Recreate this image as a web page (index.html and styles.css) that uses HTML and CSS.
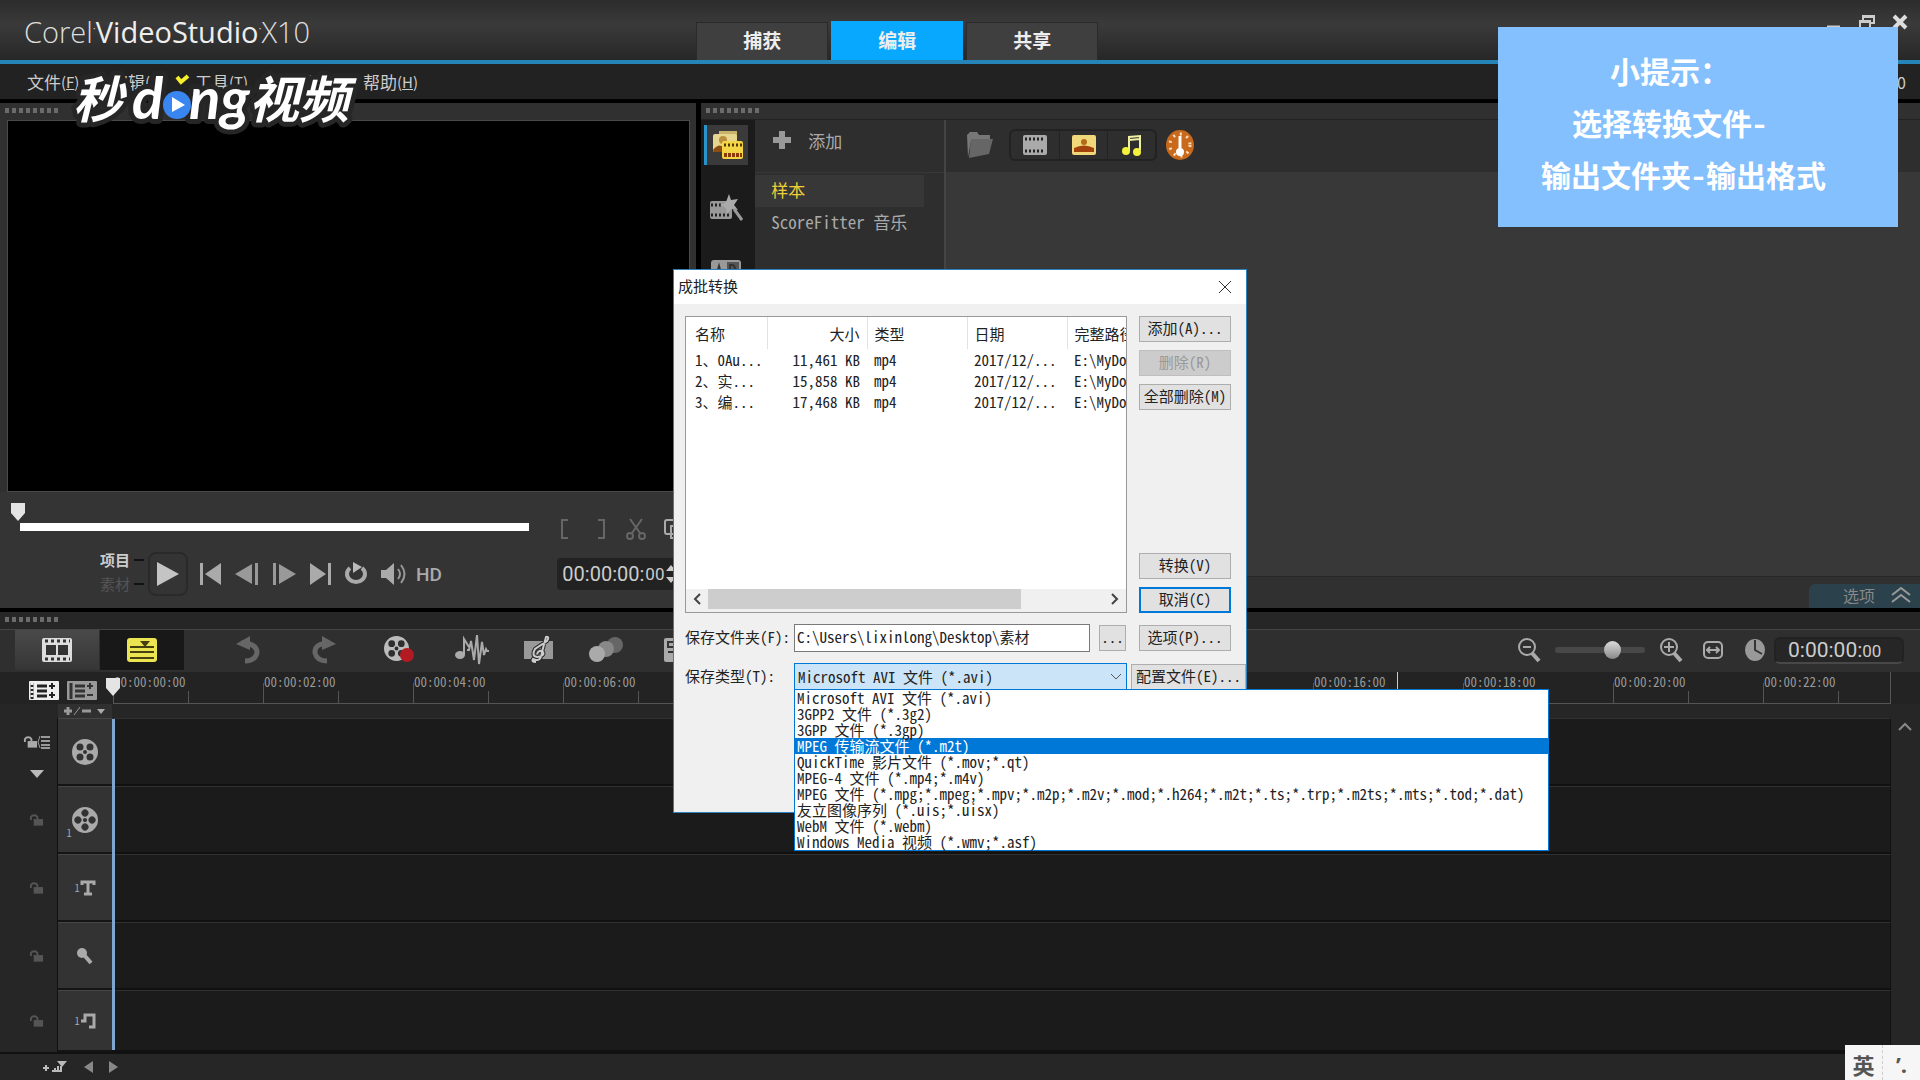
FILE: index.html
```
<!DOCTYPE html>
<html lang="zh-CN">
<head>
    <meta charset="utf-8">
    <title>Corel VideoStudio X10</title>
    <link rel="stylesheet" href="styles.css">
</head>
<body>
<!-- shared icons -->
<svg class="defs" width="0" height="0">
    <symbol id="lock" viewBox="0 0 16 16">
        <path d="M2 8V5a4 4 0 0 1 7 0v2" fill="none" stroke="currentColor" stroke-width="2"/>
        <rect x="5" y="7" width="10" height="7" fill="currentColor"/>
    </symbol>
    <symbol id="reel" viewBox="0 0 26 26">
        <path fill-rule="evenodd" fill="currentColor" d="M13 0a13 13 0 1 0 0 26a13 13 0 1 0 0-26zM8 4.500a3.500 3.500 0 1 1 0 7a3.500 3.500 0 1 1 0-7zM18 4.500a3.500 3.500 0 1 1 0 7a3.500 3.500 0 1 1 0-7zM8 14.500a3.500 3.500 0 1 1 0 7a3.500 3.500 0 1 1 0-7zM18 14.500a3.500 3.500 0 1 1 0 7a3.500 3.500 0 1 1 0-7zM13 11a2 2 0 1 1 0 4a2 2 0 1 1 0-4z"/>
    </symbol>
    <symbol id="grip" viewBox="0 0 60 6">
        <path d="M3 0v5M10 0v5M17 0v5M24 0v5M31 0v5M38 0v5M45 0v5M52 0v5" stroke="#6b6b6b" stroke-width="4"/>
    </symbol>
    <symbol id="film" viewBox="0 0 24 20">
        <rect width="24" height="20" rx="2" fill="currentColor"/>
        <path d="M2 4h20M2 16h20" stroke="#222" stroke-width="3" stroke-dasharray="2 2"/>
    </symbol>
    <symbol id="marker" viewBox="0 0 16 18">
        <path d="M1 0h14v10l-7 8l-7-8z" fill="#e4e4e4"/>
    </symbol>
</svg>

<header class="titlebar">
    <h1 class="logo">Corel<sup>•</sup><b>VideoStudio</b><sup>•</sup>X10</h1>
    <nav class="tabs">
        <button class="tab">捕获</button>
        <button class="tab active">编辑</button>
        <button class="tab">共享</button>
    </nav>
    <div class="window-buttons">
        <button aria-label="最小化"><svg width="16" height="16"><path d="M1 13h13" stroke="#ccc" stroke-width="3"/></svg></button>
        <button aria-label="还原"><svg width="18" height="16"><path d="M5 6V2h11v7h-3M2 15V7h10v8M2 8h10M5 3h11" fill="none" stroke="#ccc" stroke-width="2"/></svg></button>
        <button aria-label="关闭"><svg width="16" height="16"><path d="M2 2l12 12M14 2L2 14" stroke="#ddd" stroke-width="4"/></svg></button>
    </div>
</header>

<nav class="menubar">
    <button>文件<small>(<u>F</u>)</small></button>
    <button>编辑<small>(<u>E</u>)</small></button>
    <button>工具<small>(<u>T</u>)</small></button>
    <button>设置<small>(<u>S</u>)</small></button>
    <button>帮助<small>(<u>H</u>)</small></button>
    <span class="project-info">0</span>
</nav>

<main class="workspace">
    <section class="player">
        <svg class="grip" width="60" height="6"><use href="#grip"/></svg>
        <div class="screen"></div>
        <div class="scrub">
            <div class="track-bar"><svg class="thumb" width="16" height="18"><use href="#marker"/></svg></div>
            <div class="trim">
                <svg width="50" height="22" fill="none" stroke="#666" stroke-width="2"><path d="M9 2H3v18h6M39 2h6v18h-6"/></svg>
                <svg width="22" height="22" fill="none" stroke="#666" stroke-width="2"><path d="M5 1l10 14M17 1L7 15"/><circle cx="5" cy="18" r="3"/><circle cx="17" cy="18" r="3"/></svg>
                <svg width="22" height="22" fill="none" stroke="#aaa" stroke-width="2"><rect x="2" y="2" width="14" height="14" rx="2"/><rect x="8" y="8" width="12" height="12"/></svg>
            </div>
        </div>
        <div class="controls">
            <div class="mode"><span class="on">项目</span><span>素材</span></div>
            <button class="play" aria-label="播放"><svg width="24" height="26"><path d="M1 1l22 12L1 25z" fill="#c4c4c4"/></svg></button>
            <button aria-label="起始"><svg width="22" height="22"><path d="M0 0h3v22H0zM21 0v22L5 11z" fill="#aaa"/></svg></button>
            <button aria-label="上一帧"><svg width="26" height="22"><path d="M18 1v20L1 11zM21 0h3v22h-3z" fill="#999"/></svg></button>
            <button aria-label="下一帧"><svg width="26" height="22"><path d="M7 1v20l17-10zM1 0h3v22H1z" fill="#999"/></svg></button>
            <button aria-label="结束"><svg width="22" height="22"><path d="M18 0h3v22h-3zM0 0v22l16-11z" fill="#aaa"/></svg></button>
            <button aria-label="重复"><svg width="24" height="24"><path d="M6 6a9 8 0 1 0 12 0" fill="none" stroke="#aaa" stroke-width="4"/><path d="M9 0l9 5l-9 6z" fill="#bbb"/></svg></button>
            <button aria-label="音量"><svg width="28" height="24"><path d="M1 8h5l8-7v22l-8-7H1z" fill="#aaa"/><path d="M18 7q4 5 0 10M21 3q7 9 0 18" fill="none" stroke="#999" stroke-width="2"/></svg></button>
            <button class="hd">HD</button>
            <div class="timecode">00:00:00:<small>00</small><svg width="12" height="20"><path d="M1 7l5-6l5 6zM1 13l5 6l5-6z" fill="#ccc"/></svg></div>
        </div>
    </section>

    <section class="library">
        <svg class="grip" width="60" height="6"><use href="#grip"/></svg>
        <div class="library-body">
            <div class="rail">
                <button class="active" aria-label="媒体">
                    <svg width="32" height="30"><path d="M7 1h18v6H7z" fill="#c9b36a"/><rect x="1" y="4" width="24" height="18" rx="2" fill="#e6d68e"/><circle cx="11" cy="10" r="4" fill="#b98e3c"/><path d="M1 20q6-8 12-2v4H2z" fill="#8d4c12"/><rect x="10" y="11" width="21" height="18" rx="2" fill="#f4d545"/><path d="M12 15h18" stroke="#4d3708" stroke-width="3" stroke-dasharray="2 2"/><path d="M12 25h18" stroke="#8d3c08" stroke-width="4" stroke-dasharray="3 1"/></svg>
                </button>
                <button aria-label="即时项目">
                    <svg width="34" height="28"><rect x="1" y="7" width="22" height="18" rx="2" fill="#999"/><path d="M2 11h20M2 21h20" stroke="#222" stroke-width="3" stroke-dasharray="2 2"/><path d="M20 0l2 6l7-1l-4 6l4 5l-7-1l-4 5l-1-6l-6-3l6-3z" fill="#aaa"/><path d="M25 15l8 11" stroke="#999" stroke-width="3"/></svg>
                </button>
                <button aria-label="转场">
                    <svg width="30" height="22"><rect x="0" y="0" width="30" height="22" rx="3" fill="#999"/><path d="M16 2h12v18H16z" fill="#555"/><path d="M5 17l3-11l3 11M19 17V5h3q4 3 0 6h-3" fill="none" stroke="#333" stroke-width="2"/></svg>
                </button>
            </div>
            <div class="folders">
                <button class="add"><svg width="18" height="20"><path d="M9 1v18M0 10h18" stroke="#999" stroke-width="6"/></svg>添加</button>
                <ul>
                    <li class="selected">样本</li>
                    <li>ScoreFitter 音乐</li>
                </ul>
            </div>
            <div class="media">
                <div class="media-toolbar">
                    <button aria-label="导入"><svg width="28" height="26"><path d="M1 3l3-3h7l2 3h11v6H5L2 25z" fill="#777"/><path d="M5 7h22l-4 15L3 26z" fill="#666"/></svg></button>
                    <div class="filters">
                        <button class="grey" aria-label="视频"><svg width="24" height="20"><use href="#film"/></svg></button>
                        <button aria-label="照片"><svg width="24" height="20"><rect width="24" height="20" rx="2" fill="#efd77a"/><circle cx="12" cy="7" r="3" fill="#b06a18"/><path d="M2 17v-4q10-5 20 0v4z" fill="#a2420c"/></svg></button>
                        <button aria-label="音频"><svg width="22" height="22"><path d="M8 17V3l11-1v14M8 6l11-1" fill="none" stroke="#f1f0a0" stroke-width="2"/><circle cx="5" cy="17" r="4" fill="#f4f23c"/><circle cx="16" cy="18" r="4" fill="#f4f23c"/></svg></button>
                    </div>
                    <button aria-label="仪表"><svg width="28" height="30"><ellipse cx="14" cy="15" rx="14" ry="15" fill="#c8691c"/><ellipse cx="14" cy="15" rx="10" ry="11" fill="none" stroke="#f6dcc0" stroke-width="3" stroke-dasharray="2 5"/><path d="M14 6v12" stroke="#fff" stroke-width="3"/><circle cx="14" cy="22" r="4" fill="#fff"/></svg></button>
                </div>
                <div class="media-grid"></div>
                <div class="media-footer">
                    <button class="options">选项<svg width="20" height="16" fill="none" stroke="#999" stroke-width="2"><path d="M1 8l9-7l9 7M1 15l9-7l9 7"/></svg></button>
                </div>
            </div>
        </div>
    </section>
</main>

<section class="timeline">
    <svg class="grip" width="60" height="6"><use href="#grip"/></svg>
    <div class="timeline-toolbar">
        <button class="view" aria-label="故事板视图"><svg width="30" height="24"><rect width="30" height="24" rx="2" fill="#ddd"/><path d="M3 3h25M3 21h25" stroke="#333" stroke-width="3" stroke-dasharray="3 3"/><path d="M4 7h10v10H4zM16 7h10v10H16z" fill="#333"/></svg></button>
        <button class="view active" aria-label="时间轴视图"><svg width="30" height="24"><rect width="30" height="24" rx="3" fill="#ece552"/><path d="M3 9h24M3 14h24M3 20h24" stroke="#444010" stroke-width="2"/><path d="M13 3h10l-5 6z" fill="#444010"/></svg></button>
        <div class="tools">
            <button class="wide" aria-label="撤销"><svg width="24" height="28"><path d="M5 7q16 0 16 10q-2 8-12 8" fill="none" stroke="#666" stroke-width="5"/><path d="M0 8l14-8v14z" fill="#666"/></svg></button>
            <button class="wide" aria-label="重做"><svg width="24" height="28"><path d="M18 7q-16 0-15 10q2 8 12 8" fill="none" stroke="#666" stroke-width="5"/><path d="M24 8L10 0v14z" fill="#666"/></svg></button>
            <button class="wide" aria-label="录制"><svg width="32" height="28"><svg x="0" y="0" width="25" height="25" color="#bbb"><use href="#reel"/></svg><circle cx="23" cy="19" r="7" fill="#b31b22"/></svg></button>
            <button aria-label="混音器"><svg width="34" height="30"><ellipse cx="5" cy="20" rx="5" ry="4" fill="#aaa"/><path d="M9 20V4l5 8M12 15h2l2-9l3 19l3-25l2 29l3-22l2 13l2-6l1 2h3" fill="none" stroke="#aaa" stroke-width="2"/></svg></button>
            <button aria-label="自动音乐"><svg width="32" height="30"><rect x="1" y="6" width="29" height="18" fill="#999"/><path d="M13 27q-5 0-3-3q8 4 9-7l4-15q4-1 1 4L12 14q-4 7 2 8q8-1 6-5q-4-3-6 2" fill="none" stroke="#2b2b2b" stroke-width="4"/><path d="M13 27q-5 0-3-3q8 4 9-7l4-15q4-1 1 4L12 14q-4 7 2 8q8-1 6-5q-4-3-6 2" fill="none" stroke="#ccc" stroke-width="2"/></svg></button>
            <button aria-label="追踪运动"><svg width="34" height="26"><circle cx="26" cy="8" r="8" fill="#666"/><circle cx="17" cy="12" r="8" fill="#888"/><circle cx="8" cy="17" r="8" fill="#aaa"/></svg></button>
            <button aria-label="字幕编辑器"><svg width="18" height="24"><rect width="18" height="24" rx="2" fill="#aaa"/><path d="M4 4h10v5H4zM4 14h10" stroke="#333" stroke-width="2" fill="none"/></svg></button>
        </div>
        <div class="zoom">
            <button aria-label="缩小"><svg width="24" height="26" fill="none" stroke="#aaa"><circle cx="10" cy="10" r="8" stroke-width="2"/><path d="M6 10h8" stroke-width="2"/><path d="M15 16l7 8" stroke-width="4"/></svg></button>
            <input type="range" min="0" max="100" value="67" aria-label="缩放">
            <button aria-label="放大"><svg width="24" height="26" fill="none" stroke="#aaa"><circle cx="10" cy="10" r="8" stroke-width="2"/><path d="M5 10h10M10 5v10" stroke-width="2"/><path d="M15 16l7 8" stroke-width="4"/></svg></button>
            <button aria-label="适合窗口"><svg width="20" height="18" fill="none" stroke="#aaa" stroke-width="2"><rect x="1" y="1" width="18" height="16" rx="4"/><path d="M4 9h12M7 6L4 9l3 3M13 6l3 3l-3 3"/></svg></button>
            <button aria-label="项目区间"><svg width="20" height="22"><ellipse cx="10" cy="11" rx="10" ry="11" fill="#999"/><path d="M10 1v10l7 4" fill="none" stroke="#333" stroke-width="2"/></svg></button>
            <div class="duration">0:00:00:<small>00</small></div>
        </div>
    </div>
    <div class="ruler-row">
        <div class="corner">
            <svg width="30" height="20"><rect width="30" height="19" rx="1" fill="#eee"/><path d="M8 5h10M8 10h10M8 15h10M3 2v16" stroke="#222" stroke-width="3"/><path d="M3 2v16" stroke="#eee" stroke-width="3" stroke-dasharray="2 2"/><path d="M23 2v6M20 5h6M23 11v6M20 14h6" stroke="#222" stroke-width="2"/></svg>
            <svg width="30" height="20"><rect width="30" height="19" rx="1" fill="#999"/><path d="M8 5h10M8 10h10M8 15h10M4 2v16" stroke="#333" stroke-width="3"/><path d="M23 2v6M20 5h6M20 14h6" stroke="#333" stroke-width="2"/></svg>
        </div>
        <div class="ruler">
            <span>00:00:00:00</span><span>00:00:02:00</span><span>00:00:04:00</span><span>00:00:06:00</span>
            <span>00:00:08:00</span><span>00:00:10:00</span><span>00:00:12:00</span><span>00:00:14:00</span>
            <span>00:00:16:00</span><span>00:00:18:00</span><span>00:00:20:00</span><span>00:00:22:00</span>
            <i class="hover-mark"></i>
        </div>
        <svg class="playhead" width="16" height="18"><use href="#marker"/></svg>
    </div>
    <div class="tracks">
        <button class="track-menu" aria-label="添加/删除轨道"><svg width="44" height="10"><path d="M1 5h8M5 1v8M19 5h9" stroke="#999" stroke-width="3"/><path d="M11 9l6-8" stroke="#999" stroke-width="1"/><path d="M34 3h8l-4 5z" fill="#aaa"/></svg></button>
        <div class="track">
            <div class="track-lock first"><svg width="28" height="16"><svg width="15" height="16" color="#aaa"><use href="#lock"/></svg><path d="M18 3h9M18 7h9M18 11h9M18 14h9" stroke="#999" stroke-width="2"/><path d="M17 2l-2 6l2 6" stroke="#999" fill="none"/></svg><svg width="14" height="8"><path d="M0 0h14L7 8z" fill="#bbb"/></svg></div>
            <div class="track-head"><svg width="26" height="26"><use href="#reel"/></svg></div>
            <div class="lane"></div>
        </div>
        <div class="track">
            <div class="track-lock"><svg width="15" height="16"><use href="#lock"/></svg></div>
            <div class="track-head reel-head"><sub>1</sub><svg width="26" height="26"><g transform="rotate(45 13 13)"><use href="#reel" width="26" height="26"/></g></svg></div>
            <div class="lane"></div>
        </div>
        <div class="track">
            <div class="track-lock"><svg width="15" height="16"><use href="#lock"/></svg></div>
            <div class="track-head"><sub>1</sub><svg width="16" height="16"><path d="M2 5V2h12v3M8 2v12M4 14h8" fill="none" stroke="currentColor" stroke-width="3"/></svg></div>
            <div class="lane"></div>
        </div>
        <div class="track">
            <div class="track-lock"><svg width="15" height="16"><use href="#lock"/></svg></div>
            <div class="track-head"><svg width="16" height="18"><circle cx="5" cy="6" r="5" fill="currentColor"/><path d="M8 9l6 7" stroke="currentColor" stroke-width="4"/></svg></div>
            <div class="lane"></div>
        </div>
        <div class="track last">
            <div class="track-lock"><svg width="15" height="16"><use href="#lock"/></svg></div>
            <div class="track-head"><sub>1</sub><svg width="16" height="18"><path d="M1 9h4V3h9v12h-5" fill="none" stroke="currentColor" stroke-width="3"/></svg></div>
            <div class="lane"></div>
        </div>
        <i class="playline"></i>
        <svg class="scroll-up" width="14" height="9"><path d="M1 8l6-6l6 6" fill="none" stroke="#888" stroke-width="2"/></svg>
    </div>
    <div class="timeline-footer">
        <button aria-label="轨道高度"><svg width="26" height="12"><path d="M1 7h6M4 4v6M10 10h3M13 7v3M16 5v5M19 5v5M10 10h10" stroke="#bbb" stroke-width="2"/><path d="M15 0h10l-5 6z" fill="#bbb"/></svg></button>
        <button aria-label="向左"><svg width="9" height="12"><path d="M9 0v12L0 6z" fill="#888"/></svg></button>
        <button aria-label="向右"><svg width="9" height="12"><path d="M0 0v12l9-6z" fill="#888"/></svg></button>
    </div>
</section>

<!-- batch convert dialog -->
<div class="dialog" role="dialog" aria-labelledby="dialogTitle">
    <div class="dialog-title">
        <span id="dialogTitle">成批转换</span>
        <button aria-label="关闭"><svg width="14" height="14"><path d="M1 1l12 12M13 1L1 13" stroke="#333" stroke-width="1"/></svg></button>
    </div>
    <div class="dialog-body">
        <div class="file-list">
            <table>
                <thead>
                    <tr><th class="name">名称</th><th class="num">大小</th><th>类型</th><th>日期</th><th>完整路径</th></tr>
                </thead>
                <tbody>
                    <tr><td class="name">1、0Au...</td><td class="num">11,461 KB</td><td>mp4</td><td>2017/12/...</td><td>E:\MyDoc</td></tr>
                    <tr><td class="name">2、实...</td><td class="num">15,858 KB</td><td>mp4</td><td>2017/12/...</td><td>E:\MyDoc</td></tr>
                    <tr><td class="name">3、编...</td><td class="num">17,468 KB</td><td>mp4</td><td>2017/12/...</td><td>E:\MyDoc</td></tr>
                </tbody>
            </table>
            <div class="hscroll">
                <svg width="22" height="20"><path d="M14 5l-5 5l5 5" fill="none" stroke="#444" stroke-width="2"/></svg>
                <div class="hscroll-track"><div class="hscroll-thumb"></div></div>
                <svg width="22" height="20"><path d="M8 5l5 5l-5 5" fill="none" stroke="#444" stroke-width="2"/></svg>
            </div>
        </div>
        <div class="dialog-buttons">
            <button class="btn">添加(A)...</button>
            <button class="btn" disabled>删除(R)</button>
            <button class="btn">全部删除(M)</button>
            <button class="btn push">转换(V)</button>
            <button class="btn default">取消(C)</button>
        </div>
    </div>
    <div class="form-row">
        <label for="folder">保存文件夹(F):</label>
        <input type="text" id="folder" value="C:\Users\lixinlong\Desktop\素材">
        <button class="btn browse">...</button>
        <button class="btn">选项(P)...</button>
    </div>
    <div class="form-row type-row">
        <label for="type">保存类型(T):</label>
        <div class="combo">
            <select id="type"><option>Microsoft AVI 文件 (*.avi)</option></select>
            <svg class="arrow" width="12" height="8"><path d="M1 1l5 5l5-5" fill="none" stroke="#555"/></svg>
            <ul class="dropdown" role="listbox">
                <li role="option">Microsoft AVI 文件 (*.avi)</li>
                <li role="option">3GPP2 文件 (*.3g2)</li>
                <li role="option">3GPP 文件 (*.3gp)</li>
                <li role="option" class="selected" aria-selected="true">MPEG 传输流文件 (*.m2t)</li>
                <li role="option">QuickTime 影片文件 (*.mov;*.qt)</li>
                <li role="option">MPEG-4 文件 (*.mp4;*.m4v)</li>
                <li role="option">MPEG 文件 (*.mpg;*.mpeg;*.mpv;*.m2p;*.m2v;*.mod;*.h264;*.m2t;*.ts;*.trp;*.m2ts;*.mts;*.tod;*.dat)</li>
                <li role="option">友立图像序列 (*.uis;*.uisx)</li>
                <li role="option">WebM 文件 (*.webm)</li>
                <li role="option">Windows Media 视频 (*.wmv;*.asf)</li>
            </ul>
        </div>
        <button class="btn profile">配置文件(E)...</button>
    </div>
</div>

<svg class="cursor" width="14" height="22"><path d="M1 1v17l4-4l3 7l3-1l-3-7h5z" fill="#fff" stroke="#222"/></svg>

<svg class="watermark" width="300" height="80" role="img" aria-label="秒dong视频">
    <g class="mark-text">
        <text x="8" y="56" class="cjk">秒</text>
        <text x="184" y="56" class="cjk">视频</text>
        <text x="67" y="57">d</text>
        <text x="124" y="57">ng</text>
    </g>
    <circle cx="112" cy="43" r="14" fill="#3a86f0"/>
    <path d="M107 35v15l13-7z" fill="#fff"/>
    <path d="M112 15l4 5l7-6" fill="none" stroke="#f7ee2c" stroke-width="4"/>
</svg>

<aside class="tip">
    <p class="heading">小提示：</p>
    <p class="step">选择转换文件-</p>
    <p class="detail">输出文件夹-输出格式</p>
</aside>

<div class="ime"><span>英</span><span class="punct">’.</span></div>
</body>
</html>
```
FILE: styles.css
```
* {
    box-sizing: border-box;
}
body {
    margin: 0;
    height: 100vh;
    display: flex;
    flex-direction: column;
    overflow: hidden;
    background-color: #000;
    color: #aaa;
    font-family: "Noto Sans CJK SC", sans-serif;
    font-size: 16px;
}
button {
    border: 0;
    padding: 0;
    background: none;
    color: inherit;
    font: inherit;
    display: flex;
    align-items: center;
    justify-content: center;
}
ul {
    list-style: none;
    margin: 0;
    padding: 0;
}
svg {
    flex: none;
    display: block;
}
.defs {
    position: absolute;
}
.grip {
    margin: 5px 4px 6px;
}

/* title bar */
.titlebar {
    height: 64px;
    display: grid;
    grid-template-columns: 36% 1fr;
    border-bottom: 4px solid #2585b8;
    background: linear-gradient(#2c2c2c, #3a3a3a 40%, #272727);
    position: relative;
}
.logo {
    margin: 0 0 0 24px;
    align-self: center;
    color: #ddd;
    font-family: "Open Sans", sans-serif;
    font-size: 29px;
    font-weight: 300;
    line-height: 40px;
    padding-top: 4px;
    white-space: nowrap;
}
.logo b {
    font-weight: 400;
    color: #eee;
}
.logo sup {
    font-size: 8px;
    vertical-align: 12px;
    line-height: 0;
}
.tabs {
    display: flex;
    align-items: flex-end;
    gap: 3px;
    padding-left: 5px;
}
.tab {
    width: 132px;
    height: 38px;
    padding-bottom: 3px;
    background-color: #3f3f3f;
    border: 1px solid #2a2a2a;
    border-bottom: 0;
    color: #eee;
    font-size: 19px;
    font-weight: 700;
    line-height: 32px;
}
.tab.active {
    background-color: #08a8ff;
    border-color: #08a8ff;
    height: 39px;
}
.window-buttons {
    position: absolute;
    top: 14px;
    right: 12px;
    display: flex;
    gap: 16px;
}

/* menu bar */
.menubar {
    height: 35px;
    padding: 0 14px 0 27px;
    display: flex;
    align-items: center;
    background-color: #222;
    color: #ccc;
}
.menubar button {
    width: 84px;
    justify-content: flex-start;
    font-size: 17px;
}
.menubar small {
    font-size: 15px;
}
.project-info {
    margin-left: auto;
}

/* player */
.workspace {
    flex: 1;
    min-height: 0;
    margin: 4px 0;
    display: grid;
    grid-template-columns: 4fr 7fr;
    gap: 5px;
}
.player, .library {
    min-width: 0;
    display: flex;
    flex-direction: column;
    background-color: #303030;
}
.screen {
    flex: 1;
    margin: 0 6px 0 7px;
    background-color: #000;
    border: 1px solid #4a4a4a;
}
.scrub {
    height: 56px;
    padding: 0 10px 0 20px;
    display: flex;
    align-items: center;
    background-color: #343434;
}
.track-bar {
    width: 509px;
    height: 8px;
    margin-top: 14px;
    background-color: #fff;
    position: relative;
}
.thumb {
    position: absolute;
    left: -10px;
    top: -20px;
}
.trim {
    display: flex;
    gap: 16px;
    margin: 18px 0 0 30px;
}
.controls {
    height: 60px;
    padding: 0 0 8px 100px;
    display: flex;
    align-items: center;
    gap: 12px;
    background-color: #343434;
}
.mode {
    display: flex;
    flex-direction: column;
    gap: 4px;
    padding-bottom: 4px;
    font-size: 15px;
    line-height: 20px;
    color: #555;
}
.mode .on {
    color: #ccc;
    font-weight: 700;
}
.mode span::after {
    content: "";
    display: inline-block;
    width: 10px;
    height: 2px;
    margin-left: 4px;
    vertical-align: 5px;
    background-color: #111;
}
.play {
    width: 40px;
    height: 44px;
    margin-left: -8px;
    border: 2px solid #2a2a2a;
    border-radius: 8px;
}
.hd {
    margin-left: -4px;
    font-family: Roboto, sans-serif;
    font-size: 19px;
    font-weight: 500;
}
.timecode {
    margin-left: auto;
    width: 139px;
    height: 32px;
    padding-left: 5px;
    display: flex;
    align-items: center;
    gap: 1px;
    background-color: #222;
    border-radius: 4px;
    color: #ccc;
    font-family: Roboto, sans-serif;
    font-size: 20px;
}
.timecode small, .duration small {
    font-size: 17px;
}

/* library */
.library .grip {
    margin-bottom: 5px;
}
.library-body {
    flex: 1;
    min-height: 0;
    display: flex;
    border-top: 1px solid #222;
}
.rail {
    width: 54px;
    padding: 5px 3px;
    display: flex;
    flex-direction: column;
    gap: 23px;
    background-color: #1b1b1b;
}
.rail button {
    width: 44px;
    height: 40px;
}
.rail .active {
    background-color: #3a3a3a;
    border-left: 3px solid #2a93cc;
}
.folders {
    width: 191px;
    background-color: #2e2e2e;
    border-right: 2px solid #444;
    font-family: "Noto Sans Mono CJK SC", "Noto Sans CJK SC", sans-serif;
    font-size: 17px;
}
.add {
    width: 100%;
    height: 53px;
    padding: 0 18px 12px;
    justify-content: flex-start;
    gap: 17px;
    border-bottom: 1px solid #383838;
}
.folders li {
    height: 32px;
    margin-right: 20px;
    padding-left: 16px;
    line-height: 29px;
    white-space: nowrap;
}
.folders ul {
    padding-top: 2px;
}
.folders .selected {
    background-color: #373737;
    color: #f0cf3a;
}
.media {
    flex: 1;
    display: flex;
    flex-direction: column;
}
.media-toolbar {
    height: 52px;
    padding: 0 0 3px 20px;
    display: flex;
    align-items: center;
    gap: 9px;
    background-color: #2e2e2e;
}
.filters {
    display: flex;
    margin-left: 6px;
    border: 2px solid #222;
    border-radius: 6px;
}
.filters button {
    width: 48px;
    height: 28px;
}
.filters button + button {
    border-left: 1px solid #222;
}
.grey {
    color: #aaa;
}
.media-grid {
    flex: 1;
    background-color: #383838;
}
.media-footer {
    height: 32px;
    display: flex;
    align-items: flex-end;
    justify-content: flex-end;
    border-top: 1px solid #272727;
}
.options {
    width: 111px;
    height: 24px;
    padding: 0 9px 2px 0;
    justify-content: flex-end;
    gap: 16px;
    background-color: #2b414c;
    border-radius: 6px 0 0 0;
    color: #888;
    font-size: 16px;
}

/* timeline */
.timeline {
    background-color: #262626;
    display: flex;
    flex-direction: column;
    color: #999;
}
.timeline-toolbar {
    height: 43px;
    padding: 0 0 2px 15px;
    display: flex;
    border-top: 1px solid #444;
    background-color: #2f2f2f;
}
.timeline > .grip {
    margin-bottom: 6px;
}
.view {
    width: 84px;
    height: 40px;
    margin-right: 1px;
    background: linear-gradient(#4a4a4a, #363636);
}
.view.active {
    background: #181818;
}
.tools {
    display: flex;
    margin-left: 25px;
}
.tools button {
    width: 67px;
}
.tools .wide {
    width: 76px;
}
.zoom {
    margin-left: auto;
    padding-right: 16px;
    display: flex;
    align-items: center;
    gap: 16px;
}
.zoom input {
    appearance: none;
    width: 90px;
    height: 6px;
    margin: 0 -3px;
    background-color: #484848;
    border-radius: 3px;
}
.zoom input::-webkit-slider-thumb {
    appearance: none;
    width: 17px;
    height: 18px;
    border-radius: 50%;
    background: linear-gradient(#ddd, #888);
}
.zoom button {
    min-width: 26px;
}
.duration {
    width: 130px;
    height: 27px;
    margin-left: -10px;
    padding-left: 12px;
    background-color: #262626;
    border: 2px solid #222;
    border-bottom-color: #484848;
    border-radius: 6px;
    color: #ccc;
    font-family: Roboto, sans-serif;
    font-size: 21px;
    line-height: 23px;
}
.ruler-row {
    height: 32px;
    display: flex;
    background-color: #232323;
    position: relative;
}
.corner {
    width: 113px;
    padding: 9px 0 0 29px;
    display: flex;
    gap: 8px;
}
.ruler {
    flex: 1;
    min-width: 0;
    margin-right: 29px;
    display: flex;
    position: relative;
    border-bottom: 1px solid #555;
    border-right: 1px solid #555;
    overflow: hidden;
}
.ruler span {
    flex: 0 0 150px;
    padding: 3px 0 0 1px;
    font-family: "Noto Sans Mono CJK SC", "Liberation Mono", monospace;
    font-size: 13px;
    line-height: 14px;
    background: linear-gradient(#555, #555) 0 100% / 1px 20px no-repeat,
                linear-gradient(#555, #555) 75px 100% / 1px 12px no-repeat;
}
.playhead {
    position: absolute;
    left: 105px;
    top: 6px;
}
.hover-mark {
    position: absolute;
    left: 1284px;
    top: 0;
    width: 1px;
    height: 20px;
    background-color: #ccc;
}
.tracks {
    position: relative;
    border-bottom: 2px solid #111;
}
.track-menu {
    width: 54px;
    height: 14px;
    margin-left: 58px;
    background-color: #303030;
}
.track {
    height: 68px;
    margin-right: 29px;
    display: flex;
}
.track.last {
    height: 62px;
}
.track-lock {
    width: 58px;
    padding-left: 16px;
    display: flex;
    align-items: center;
    justify-content: center;
    color: #555;
    border-right: 1px solid #111;
}
.track-lock.first {
    flex-direction: column;
    gap: 20px;
    padding-top: 8px;
}
.track-head {
    width: 54px;
    display: flex;
    align-items: center;
    justify-content: center;
    background-color: #333;
    border-top: 1px solid #464646;
    border-bottom: 2px solid #151515;
    color: #aaa;
}
.track-head sub {
    font-size: 10px;
    line-height: 10px;
}
.reel-head {
    padding-right: 6px;
}
.reel-head sub {
    align-self: flex-end;
    padding-bottom: 14px;
}
.lane {
    flex: 1;
    background-color: #1b1b1b;
    border-top: 1px solid #303030;
    border-bottom: 2px solid #111;
    border-right: 1px solid #111;
}
.playline {
    position: absolute;
    left: 112px;
    top: 15px;
    bottom: 2px;
    width: 3px;
    background-color: #7ea6cf;
}
.scroll-up {
    position: absolute;
    right: 8px;
    top: 18px;
}
.timeline-footer {
    height: 26px;
    padding-left: 42px;
    display: flex;
    align-items: center;
    gap: 16px;
}

/* dialog */
.dialog {
    position: absolute;
    left: 673px;
    top: 269px;
    width: 574px;
    height: 544px;
    background-color: #f0f0f0;
    border: 1px solid #2f80bd;
    color: #222;
    font-family: "Noto Sans Mono CJK SC", "Noto Sans CJK SC", sans-serif;
    font-size: 15px;
}
.dialog-title {
    height: 34px;
    padding: 0 14px 0 4px;
    display: flex;
    align-items: center;
    justify-content: space-between;
    background-color: #fff;
}
.dialog-title span {
    padding-bottom: 3px;
}
.dialog-body {
    padding: 12px 15px 0 11px;
    display: flex;
    justify-content: space-between;
}
.file-list {
    width: 442px;
    height: 297px;
    display: flex;
    flex-direction: column;
    justify-content: space-between;
    overflow: hidden;
    background-color: #fff;
    border: 1px solid #999;
}
.file-list table {
    width: 481px;
    table-layout: fixed;
    border-collapse: collapse;
    line-height: 21px;
}
.file-list th {
    width: 100px;
    height: 32px;
    padding: 0 7px;
    border-right: 1px solid #e2e2e2;
    font-weight: 400;
    text-align: left;
}
.file-list td {
    padding: 0 7px;
    white-space: nowrap;
}
.file-list th.name {
    width: 81px;
}
.file-list .name {
    padding: 0 0 0 9px;
}
.file-list .num {
    text-align: right;
}
.hscroll {
    height: 23px;
    display: flex;
    background-color: #f0f0f0;
}
.hscroll-track {
    flex: 1;
}
.hscroll-thumb {
    width: 79%;
    height: 20px;
    background-color: #cdcdcd;
}
.dialog-buttons {
    width: 92px;
    display: flex;
    flex-direction: column;
    gap: 8px;
}
.btn {
    width: 92px;
    height: 26px;
    padding-bottom: 2px;
    background-color: #e1e1e1;
    border: 1px solid #adadad;
    white-space: nowrap;
    line-height: 22px;
}
.btn:disabled {
    background-color: #ccc;
    border-color: #bfbfbf;
    color: #999;
}
.btn.default {
    border: 2px solid #0078d7;
}
.btn.push {
    margin-top: auto;
}
.form-row {
    padding: 11px 15px 0 11px;
    display: flex;
    align-items: center;
}
.form-row label {
    width: 109px;
    padding-bottom: 3px;
    white-space: nowrap;
}
.form-row input {
    width: 296px;
    height: 28px;
    padding: 0 2px 3px;
    border: 1px solid #7a7a7a;
    background-color: #fff;
    color: #222;
    font: inherit;
}
.btn.browse {
    width: 27px;
    margin: 0 13px 0 9px;
}
.type-row {
    padding-right: 0;
}
.combo {
    width: 333px;
    margin-right: 4px;
    position: relative;
}
.combo select {
    display: block;
    appearance: none;
    width: 100%;
    height: 27px;
    padding: 0 3px;
    background-color: #cce4f7;
    border: 1px solid #0078d7;
    border-radius: 0;
    color: #222;
    font: inherit;
}
.arrow {
    position: absolute;
    right: 5px;
    top: 10px;
}
.dropdown {
    position: absolute;
    left: 0;
    top: 26px;
    width: 755px;
    background-color: #fff;
    border: 1px solid #0078d7;
    z-index: 1;
}
.dropdown li {
    height: 16px;
    padding-left: 2px;
    line-height: 16px;
    white-space: nowrap;
}
.dropdown .selected {
    background-color: #0078d7;
    color: #fff;
}
.btn.profile {
    width: 115px;
}

/* overlays */
.cursor {
    position: absolute;
    left: 1037px;
    top: 738px;
}
.watermark {
    position: absolute;
    left: 65px;
    top: 62px;
}
.mark-text {
    fill: #fff;
    stroke: #262626;
    stroke-width: 10px;
    stroke-linejoin: round;
    paint-order: stroke;
    font-family: Lato, sans-serif;
    font-size: 58px;
    font-weight: 700;
    font-style: italic;
}
.mark-text .cjk {
    font-family: "Noto Sans CJK SC", sans-serif;
    font-size: 50px;
}
.tip {
    position: absolute;
    right: 22px;
    top: 27px;
    width: 400px;
    height: 200px;
    padding-top: 17px;
    background-color: #84bffe;
    color: #fff;
    font-family: "Noto Sans Mono CJK SC", "Noto Sans CJK SC", sans-serif;
    font-size: 30px;
    font-weight: 700;
    line-height: 52px;
}
.tip p {
    margin: 0;
}
.tip .heading {
    padding-left: 112px;
}
.tip .step {
    padding-left: 74px;
}
.tip .detail {
    padding-left: 43px;
}
.ime {
    position: absolute;
    right: 0;
    bottom: 0;
    width: 75px;
    height: 35px;
    display: flex;
    background-color: #f6f6f6;
    color: #555;
    font-size: 22px;
    font-weight: 700;
    line-height: 38px;
}
.ime span {
    flex: 1;
    text-align: center;
}
.ime .punct {
    border-left: 1px dashed #ccc;
    font-family: "Open Sans", sans-serif;
}
```
